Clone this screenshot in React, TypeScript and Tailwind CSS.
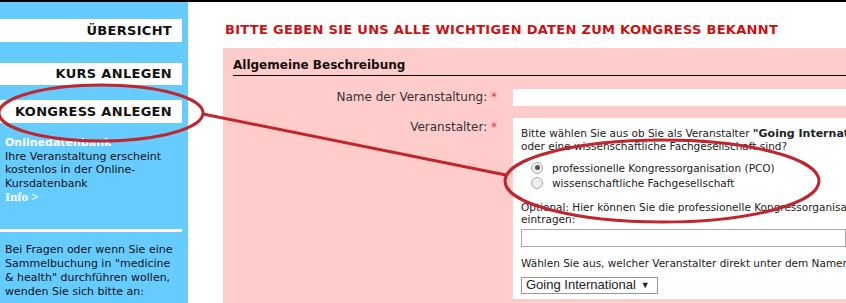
import React from 'react';

const MENU = ['ÜBERSICHT', 'KURS ANLEGEN', 'KONGRESS ANLEGEN'];

export default function App() {
  return (
    <div className="relative w-[846px] h-[303px] overflow-hidden bg-white font-['DejaVu_Sans',sans-serif]">
      <div className="h-[2px] bg-black" />
      <div className="flex">
        {/* Sidebar */}
        <aside className="w-[188px] h-[301px] shrink-0 bg-[#66ccff] pt-[17px]">
          <div className="w-[182px] h-[23px] bg-white flex items-center justify-end pr-[10px] text-[13px] font-bold tracking-[0.3px] text-[#111]">
            {MENU[0]}
          </div>
          <div className="mt-[21px] w-[182px] h-[22px] bg-white flex items-center justify-end pr-[10px] text-[13px] font-bold tracking-[0.3px] text-[#111]">
            {MENU[1]}
          </div>
          <div className="mt-[15px] w-[182px] h-[23px] bg-white flex items-center justify-end pr-[10px] text-[13px] font-bold tracking-[0.3px] text-[#111]">
            {MENU[2]}
          </div>
          <div className="mt-[13px] pl-[5px] text-[11px] leading-[13.5px] text-[#111]">
            <div className="font-bold text-white">Onlinedatenbank</div>
            <div>Ihre Veranstaltung erscheint</div>
            <div>kostenlos in der Online-</div>
            <div>Kursdatenbank</div>
            <div className="font-bold text-white font-['Liberation_Serif',serif] text-[13px]">Info &gt;</div>
          </div>
          <div className="mt-[25px] w-[182px] h-[3px] bg-white" />
          <div className="mt-[11px] pl-[5px] text-[11px] leading-[14px] text-[#111]">
            <div>Bei Fragen oder wenn Sie eine</div>
            <div>Sammelbuchung in "medicine</div>
            <div>&amp; health" durchführen wollen,</div>
            <div>wenden Sie sich bitte an:</div>
          </div>
        </aside>

        {/* Main */}
        <main className="flex-1 pl-[35px] min-w-0">
          <h1 className="mt-[18px] pl-[2px] whitespace-nowrap text-[13px] font-bold tracking-[0.3px] text-[#cc1111]">
            BITTE GEBEN SIE UNS ALLE WICHTIGEN DATEN ZUM KONGRESS BEKANNT
          </h1>
          <section className="mt-[8px] bg-[#ffcccc] pl-[10px] pt-[8px] h-[300px]">
            <div className="pb-[1px] border-b border-black text-[12px] font-bold text-[#111]">
              Allgemeine Beschreibung
            </div>
            <div className="mt-[13px] flex">
              <div className="w-[280px] shrink-0 pr-[16px] text-right text-[12px] leading-[17px] text-[#333]">
                Name der Veranstaltung: <span className="text-[#e04040]">*</span>
              </div>
              <div className="flex-1 h-[17px] bg-white" />
            </div>
            <div className="mt-[12px] flex">
              <div className="w-[280px] shrink-0 pr-[16px] pt-[1px] text-right text-[12px] leading-[17px] text-[#333]">
                Veranstalter: <span className="text-[#e04040]">*</span>
              </div>
              <div className="flex-1 h-[181px] bg-white pl-[8px] pt-[9px] text-[10.5px] leading-[12px] text-[#222] whitespace-nowrap overflow-hidden">
                <div>
                  Bitte wählen Sie aus ob Sie als Veranstalter <b className="text-[11px]">"Going International"</b> eine
                </div>
                <div>oder eine wissenschaftliche Fachgesellschaft sind?</div>
                <div className="mt-[10px] pl-[10px] flex flex-col gap-[3px]">
                  <label className="flex items-center gap-[9px]">
                    <span className="w-[12px] h-[12px] rounded-full border border-[#aaa] bg-[#eee] flex items-center justify-center">
                      <span className="w-[5px] h-[5px] rounded-full bg-[#555]" />
                    </span>
                    professionelle Kongressorganisation (PCO)
                  </label>
                  <label className="flex items-center gap-[9px]">
                    <span className="w-[12px] h-[12px] rounded-full border border-[#aaa] bg-[#eee]" />
                    wissenschaftliche Fachgesellschaft
                  </label>
                </div>
                <div className="mt-[12px]">
                  Optional: Hier können Sie die professionelle Kongressorganisation eintragen, die
                </div>
                <div>eintragen:</div>
                <div className="mt-[4px] h-[18px] border border-[#aaa] bg-white" />
                <div className="mt-[10px]">
                  Wählen Sie aus, welcher Veranstalter direkt unter dem Namen angezeigt werden soll:
                </div>
                <div className="mt-[8px] w-[137px] h-[17px] border border-[#999] bg-white flex items-center pl-[4px] font-['Liberation_Sans',sans-serif] text-[13px] text-[#222]">
                  Going International <span className="ml-[5px] text-[9px]">▼</span>
                </div>
              </div>
            </div>
          </section>
        </main>
      </div>

      {/* Annotation overlay */}
      <svg className="absolute inset-0 pointer-events-none" width="846" height="303" viewBox="0 0 846 303">
        <g fill="none" stroke="#c0262e" strokeWidth="3">
          <ellipse cx="101" cy="113" rx="102" ry="28" />
          <line x1="203" y1="114" x2="506" y2="175" />
          <ellipse cx="662" cy="181" rx="157" ry="41" />
        </g>
      </svg>
    </div>
  );
}
